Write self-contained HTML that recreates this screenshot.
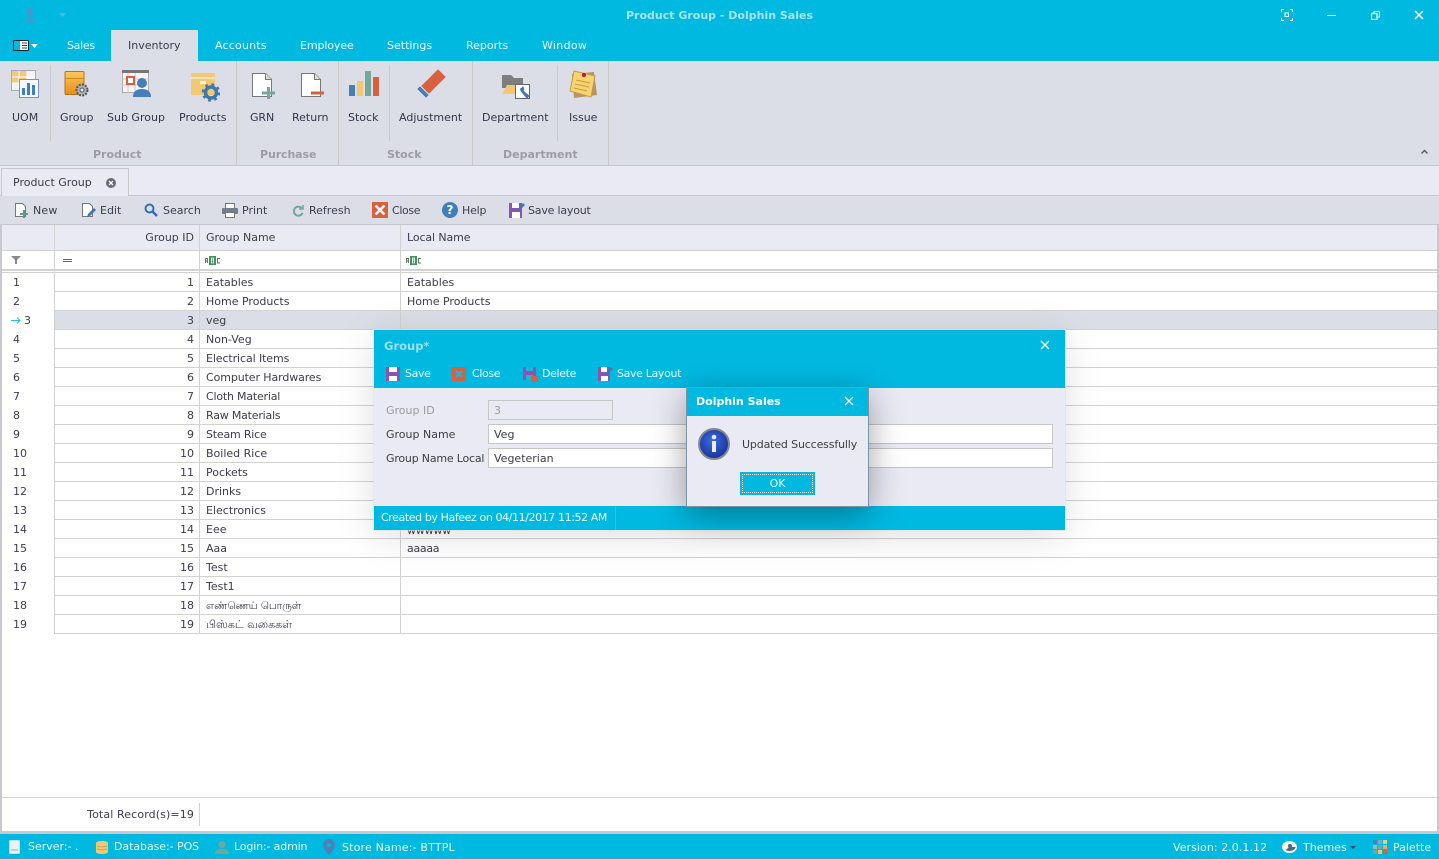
<!DOCTYPE html>
<html><head><meta charset="utf-8"><title>Product Group - Dolphin Sales</title>
<style>
html,body{margin:0;padding:0;width:1439px;height:859px;overflow:hidden;background:#fff}
body{position:relative;font:11px/14px "DejaVu Sans","Noto Sans CJK JP",sans-serif;color:#3c3c4a}
div,span,svg{position:absolute;white-space:nowrap}
.w{color:#fff}
.c{text-align:center}
.mt{top:39px;color:#eefaff}
.rl{top:111px;color:#34344a}
.gl{top:148px;font-weight:bold;color:#9c9ca8}
.tb{top:204px;color:#3c3c4e}
.hd{top:231px;color:#3c3c4e}
.r{left:54px;width:1384px;height:18px;border-bottom:1px solid #d2d2d2}
.n{left:13px;color:#3c3c4e}
.i{right:1245px;text-align:right}
.l{left:353px}
.v{position:absolute;width:1px;background:#d2d2d2}
.inp{height:18px;background:#fff;border:1px solid #c6c6c6;box-sizing:content-box}
.dt{color:#eefaff;top:367px;letter-spacing:-.35px}
.sb{top:840px;color:#e6f8fd}
</style></head><body>

<!-- title -->
<div style="left:0;top:0;width:1439px;height:61px;background:#00b9e1"></div>
<svg style="left:23px;top:7px" width="14" height="17" viewBox="0 0 14 17"><g fill="none" stroke="#5a8fc4" stroke-width="1.800"><circle cx="7" cy="2.400" r="1.400" fill="#5a8fc4"/><path d="M7 5v5l3 6M7 10l-3 6M7 6l3 3M7 6L4 9"/></g></svg>
<svg style="left:59px;top:13px" width="7" height="4"><path d="M0 0h7L3.500 4z" fill="#5ab6da"/></svg>
<div style="left:0;width:1439px;top:9px;text-align:center;font-weight:bold;color:#a6e4f4;font-size:11px">Product Group - Dolphin Sales</div>
<svg style="left:1281px;top:9px" width="12" height="12" fill="none" stroke="#fff"><path d="M.5 3V.5H3M9 .5h2.500V3M11.500 9v2.500H9M3 11.500H.5V9"/><rect x="4" y="4" width="3.500" height="3.500"/></svg>
<div style="left:1327px;top:15px;width:9px;height:1px;background:#fff"></div>
<svg style="left:1371px;top:11px" width="9" height="9" fill="none" stroke="#fff"><rect x=".5" y="2.500" width="5.500" height="6" stroke-width="1.200"/><path d="M3 2V.5h5.500V6H7"/></svg>
<svg style="left:1414px;top:10px" width="10" height="10" stroke="#fff" stroke-width="1.500"><path d="M1 1l8 8M9 1l-8 8"/></svg>

<!-- menu tabs -->
<svg style="left:13px;top:40px" width="16" height="11"><rect x=".5" y=".5" width="15" height="10" rx="1" fill="#fff" stroke="#123"/><rect x="1" y="1" width="6" height="9" fill="#00b9e1"/><path d="M9 3h5M9 5.500h5M9 8h5" stroke="#345"/></svg>
<svg style="left:31px;top:44px" width="7" height="4"><path d="M0 0h7L3.500 4z" fill="#fff"/></svg>
<div style="left:111px;top:30px;width:87px;height:31px;background:#dcdee7"></div>
<div class="mt" style="left:67px;letter-spacing:-.3px">Sales</div>
<div class="mt" style="left:128px;color:#3c3c4e">Inventory</div>
<div class="mt" style="left:215px;letter-spacing:.2px">Accounts</div>
<div class="mt" style="left:300px;letter-spacing:-.1px">Employee</div>
<div class="mt" style="left:387px">Settings</div>
<div class="mt" style="left:466px">Reports</div>
<div class="mt" style="left:542px;letter-spacing:.3px">Window</div>

<!-- ribbon -->
<div style="left:0;top:61px;width:1439px;height:104px;background:#dcdee7;border-bottom:1px solid #c8c8cc"></div>
<div class="v" style="left:236px;top:61px;height:104px;background:#c8c8cc"></div>
<div class="v" style="left:338px;top:61px;height:104px;background:#c8c8cc"></div>
<div class="v" style="left:472px;top:61px;height:104px;background:#c8c8cc"></div>
<div class="v" style="left:608px;top:61px;height:104px;background:#c8c8cc"></div>
<div class="v" style="left:50px;top:65px;height:76px;background:#c8c8cc"></div>
<div class="v" style="left:389px;top:65px;height:76px;background:#c8c8cc"></div>
<div class="v" style="left:557px;top:65px;height:76px;background:#c8c8cc"></div>

<!-- UOM -->
<svg style="left:10px;top:69px" width="30" height="30"><rect x="1.500" y="1.500" width="24" height="20" fill="#f3f3f6" stroke="#a8a8c0"/><rect x="2" y="2" width="15" height="12" fill="#f2c979"/><path d="M2 8h23M2 14h23M9 2v19M17 2v19" stroke="#fff"/><rect x="9.500" y="10.500" width="19" height="18" fill="#f6f8fc" stroke="#8090b8"/><rect x="12" y="19" width="3" height="7" fill="#3b80c0"/><rect x="17" y="14" width="3" height="12" fill="#3b80c0"/><rect x="22" y="16" width="3" height="10" fill="#3b80c0"/></svg>
<!-- Group -->
<svg style="left:64px;top:70px" width="26" height="28"><defs><linearGradient id="g1" x1="0" y1="0" x2="0" y2="1"><stop offset="0" stop-color="#fbc95a"/><stop offset="1" stop-color="#e88d1c"/></linearGradient></defs><rect x="1" y="1.500" width="19" height="23" rx="1" fill="url(#g1)" stroke="#b8741c"/><path d="M1 8.500h19" stroke="#c98a26"/><circle cx="18" cy="20" r="5.500" fill="#aab2bc" stroke="#555" stroke-width="2" stroke-dasharray="2 1.200"/><circle cx="18" cy="20" r="2" fill="#eee" stroke="#555"/></svg>
<!-- Sub group -->
<svg style="left:122px;top:70px" width="30" height="28"><rect x=".5" y=".5" width="26" height="22" fill="#f5f5f8" stroke="#aaa"/><rect x="0" y="0" width="27" height="3" fill="#777"/><path d="M0 9h27M0 15h27M6 3v20M13 3v20" stroke="#c8c8d0"/><rect x="5" y="7" width="7" height="7" fill="#fff" stroke="#d9603c" stroke-width="2"/><circle cx="20" cy="13" r="5" fill="#467fb8"/><path d="M11 27c0-6 4-8 9-8s9 2 9 8z" fill="#467fb8"/></svg>
<!-- Products -->
<svg style="left:191px;top:73px" width="29" height="29"><rect x="0" y="0" width="24" height="22" fill="#f2c873"/><path d="M0 5h24" stroke="#fff"/><rect x="9" y="8" width="6" height="3" fill="#fff" opacity=".8"/><circle cx="20" cy="19.500" r="5.500" fill="none" stroke="#3f78b0" stroke-width="3.500"/><circle cx="20" cy="19.500" r="8" fill="none" stroke="#3f78b0" stroke-width="2.500" stroke-dasharray="2.800 3.500"/></svg>
<!-- GRN -->
<svg style="left:252px;top:73px" width="24" height="26"><path d="M.5.500h13l6 6v17H.5z" fill="#fff" stroke="#777"/><path d="M13.500.500v6h6" fill="#ddd" stroke="#777"/><path d="M10 20h13M16.500 14v13" stroke="#74a898" stroke-width="3"/></svg>
<!-- Return -->
<svg style="left:301px;top:73px" width="24" height="26"><path d="M.5.500h13l6 6v17H.5z" fill="#fff" stroke="#777"/><path d="M13.500.500v6h6" fill="#ddd" stroke="#777"/><path d="M10 20h13" stroke="#d9603c" stroke-width="3"/></svg>
<!-- Stock -->
<svg style="left:349px;top:71px" width="30" height="26"><rect x="0" y="14" width="6" height="11" fill="#467fb8"/><rect x="8" y="10" width="6" height="15" fill="#f2c873"/><rect x="16" y="0" width="6" height="25" fill="#74a898"/><rect x="24" y="6" width="6" height="19" fill="#d9603c"/></svg>
<!-- Adjustment -->
<svg style="left:416px;top:69px" width="30" height="29"><path d="M22 1l7 7L13 24l-7-7z" fill="#d9603c" stroke="#d9603c" stroke-linejoin="round"/><path d="M4 18l8 8-2 2-8-8z" fill="#467fb8" stroke="#467fb8" stroke-linejoin="round"/></svg>
<!-- Department -->
<svg style="left:501px;top:74px" width="32" height="28"><path d="M1 1h9l3 3h9v10H1z" fill="#7e7e7e"/><path d="M1 20l5-9h14v9z" fill="#f2c873"/><rect x="14.500" y="10.500" width="14" height="14" fill="#fff" stroke="#666"/><path d="M20 14a3.500 3.500 0 0 0 1 4l5 6 2-2-6-5a3.500 3.500 0 0 0 0-4l-2 2z" fill="#3f78b0" stroke="#3f78b0"/></svg>
<!-- Issue -->
<svg style="left:568px;top:69px" width="30" height="30"><path d="M4 5l22-2 3 23-23 3z" fill="#a87c3c" opacity=".75"/><path d="M6 2l21 5-4 21-21-6z" fill="#f8d570" stroke="#c49a45"/><path d="M8 11l14 3M7 15l14 3M6 19l13 3" stroke="#c49a45"/><circle cx="16" cy="6" r="2" fill="#c8102e"/></svg>

<div class="rl" style="left:12px">UOM</div>
<div class="rl" style="left:60px">Group</div>
<div class="rl" style="left:107px">Sub Group</div>
<div class="rl" style="left:179px">Products</div>
<div class="rl" style="left:250px;letter-spacing:-.1px">GRN</div>
<div class="rl" style="left:292px">Return</div>
<div class="rl" style="left:348px">Stock</div>
<div class="rl" style="left:399px">Adjustment</div>
<div class="rl" style="left:482px">Department</div>
<div class="rl" style="left:569px">Issue</div>
<div class="gl" style="left:93px">Product</div>
<div class="gl" style="left:260px;letter-spacing:-.1px">Purchase</div>
<div class="gl" style="left:387px">Stock</div>
<div class="gl" style="left:503px">Department</div>
<svg style="left:1421px;top:149px" width="7" height="5" fill="none" stroke="#556" stroke-width="1.400"><path d="M.5 4.500l3-3 3 3"/></svg>

<!-- doc tabs -->
<div style="left:0;top:166px;width:1439px;height:30px;background:#e9eaf4;border-bottom:1px solid #c8c8cc;box-sizing:border-box"></div>
<div style="left:1px;top:168px;width:128px;height:28px;background:#e9eaf4;border:1px solid #c8c8cc;border-bottom:0;box-sizing:border-box"></div>
<div style="left:13px;top:176px">Product Group</div>
<svg style="left:106px;top:178px" width="10" height="10"><circle cx="5" cy="5" r="5" fill="#6a6a72"/><path d="M3 3l4 4M7 3l-4 4" stroke="#fff" stroke-width="1.300"/></svg>

<!-- toolbar -->
<div style="left:0;top:196px;width:1439px;height:28px;background:#dcdee7;border-bottom:1px solid #c8c8cc"></div>
<svg style="left:15px;top:203px" width="14" height="15"><path d="M.5.500h7l3 3v10H.5z" fill="#fff" stroke="#777"/><path d="M5 11h8M9 7v8" stroke="#5a9c88" stroke-width="2"/></svg>
<div class="tb" style="left:33px;letter-spacing:.2px">New</div>
<svg style="left:82px;top:203px" width="14" height="15"><path d="M.5.500h7l3 3v10H.5z" fill="#fff" stroke="#777"/><path d="M5 14l1-3 6-6 2 2-6 6z" fill="#3f78b0"/></svg>
<div class="tb" style="left:100px">Edit</div>
<svg style="left:144px;top:203px" width="14" height="14" fill="none" stroke="#2e70b8"><circle cx="5.500" cy="5.500" r="4" stroke-width="2"/><path d="M8.500 8.500l4.500 4.500" stroke-width="2.500"/></svg>
<div class="tb" style="left:163px">Search</div>
<svg style="left:222px;top:203px" width="16" height="15"><rect x="3.500" y=".5" width="9" height="5" fill="#fff" stroke="#777"/><rect x="0" y="5" width="16" height="6" rx="1" fill="#6f7f90"/><rect x="3.500" y="9.500" width="9" height="5" fill="#fff" stroke="#777"/></svg>
<div class="tb" style="left:242px">Print</div>
<svg style="left:292px;top:205px" width="12" height="12" fill="none" stroke="#6fa898" stroke-width="2"><path d="M10 3.500A4.500 4.500 0 1 0 10.500 8"/><path d="M11 0v4H7" stroke-width="1.500"/></svg>
<div class="tb" style="left:309px">Refresh</div>
<div style="left:372px;top:202px;width:16px;height:16px;background:#d9603c"></div>
<svg style="left:372px;top:202px" width="16" height="16" stroke="#f2f2f2" stroke-width="2.600"><path d="M3.500 3.500l9 9M12.500 3.500l-9 9"/></svg>
<div class="tb" style="left:392px;letter-spacing:-.35px">Close</div>
<div style="left:442px;top:202px;width:16px;height:16px;border-radius:8px;background:#3c7fbc;color:#fff;font:bold 12px/16px 'DejaVu Sans',sans-serif;text-align:center">?</div>
<div class="tb" style="left:462px;letter-spacing:-.2px">Help</div>
<svg style="left:509px;top:202px" width="16" height="16"><path d="M0 1h13v15H0z" fill="#8a55b0"/><rect x="3" y="1" width="7" height="5" fill="#fff"/><rect x="3" y="10" width="8" height="6" fill="#fff"/><path d="M9 7l5-6 2 2-5 5z" fill="#3f78b0"/></svg>
<div class="tb" style="left:528px;letter-spacing:-.2px">Save layout</div>

<!-- grid frame -->
<div style="left:0;top:225px;width:2px;height:606px;background:#c8c8d0"></div>
<div style="left:1437px;top:225px;width:2px;height:606px;background:#c8c8d0"></div>
<div style="left:2px;top:225px;width:1435px;height:25px;background:#e9eaf4;border-bottom:1px solid #d2d2d2"></div>
<div style="left:2px;top:269px;width:1435px;height:2px;background:#d2d2d2"></div>
<div style="left:2px;top:272px;width:1435px;height:1px;background:#d2d2d2"></div>
<div class="v" style="left:54px;top:225px;height:409px"></div>
<div class="v" style="left:199px;top:225px;height:409px"></div>
<div class="v" style="left:400px;top:225px;height:409px"></div>
<div class="hd" style="right:1245px">Group ID</div>
<div class="hd" style="left:206px">Group Name</div>
<div class="hd" style="left:407px;letter-spacing:-.1px">Local Name</div>
<svg style="left:11px;top:256px" width="10" height="8"><path d="M0 0h10L6 4v4H4V4z" fill="#8a8a8a"/></svg>
<div style="left:63px;top:259px;width:9px;height:3px;border-top:1px solid #666;border-bottom:1px solid #666;box-sizing:border-box"></div>
<svg style="left:205px;top:256px" width="16" height="9"><rect x="4" y="0" width="7" height="9" fill="#3f9460"/><path d="M6.500 2h2v2h-2zM6.500 4h2v3h-2z" fill="none" stroke="#fff" stroke-width=".8"/><path d="M.5 7V2.500h2V7M.5 5h2M15 2.500h-2.500V7H15" fill="none" stroke="#666" stroke-width=".9"/></svg>
<svg style="left:406px;top:256px" width="16" height="9"><rect x="4" y="0" width="7" height="9" fill="#3f9460"/><path d="M6.500 2h2v2h-2zM6.500 4h2v3h-2z" fill="none" stroke="#fff" stroke-width=".8"/><path d="M.5 7V2.500h2V7M.5 5h2M15 2.500h-2.500V7H15" fill="none" stroke="#666" stroke-width=".9"/></svg>

<!-- rows -->
<div class="r" style="top:273px"></div><div class="r" style="top:292px"></div>
<div class="r" style="top:311px;background:#dcdee7;left:55px;width:1382px"></div>
<div class="r" style="top:330px"></div><div class="r" style="top:349px"></div><div class="r" style="top:368px"></div><div class="r" style="top:387px"></div><div class="r" style="top:406px"></div><div class="r" style="top:425px"></div><div class="r" style="top:444px"></div><div class="r" style="top:463px"></div><div class="r" style="top:482px"></div><div class="r" style="top:501px"></div><div class="r" style="top:520px"></div><div class="r" style="top:539px"></div><div class="r" style="top:558px"></div><div class="r" style="top:577px"></div><div class="r" style="top:596px"></div><div class="r" style="top:615px"></div>
<div class="v" style="left:199px;top:273px;height:361px"></div>
<div class="v" style="left:400px;top:273px;height:361px"></div>

<div class="n" style="top:276px">1</div><div class="i" style="top:276px">1</div><div style="top:276px;left:206px">Eatables</div><div style="top:276px;left:407px">Eatables</div>
<div class="n" style="top:295px">2</div><div class="i" style="top:295px">2</div><div style="top:295px;left:206px">Home Products</div><div style="top:295px;left:407px">Home Products</div>
<svg style="left:11px;top:317px" width="10" height="7" fill="none" stroke="#22c0e8"><path d="M0 3.500h9M6 .5l3 3-3 3"/></svg>
<div style="left:24px;top:314px">3</div><div class="i" style="top:314px">3</div><div style="top:314px;left:206px">veg</div>
<div class="n" style="top:333px">4</div><div class="i" style="top:333px">4</div><div style="top:333px;left:206px">Non-Veg</div>
<div class="n" style="top:352px">5</div><div class="i" style="top:352px">5</div><div style="top:352px;left:206px;letter-spacing:-.1px">Electrical Items</div>
<div class="n" style="top:371px">6</div><div class="i" style="top:371px">6</div><div style="top:371px;left:206px;letter-spacing:-.1px">Computer Hardwares</div>
<div class="n" style="top:390px">7</div><div class="i" style="top:390px">7</div><div style="top:390px;left:206px;letter-spacing:-.2px">Cloth Material</div>
<div class="n" style="top:409px">8</div><div class="i" style="top:409px">8</div><div style="top:409px;left:206px;letter-spacing:-.2px">Raw Materials</div>
<div class="n" style="top:428px">9</div><div class="i" style="top:428px">9</div><div style="top:428px;left:206px;letter-spacing:-.2px">Steam Rice</div>
<div class="n" style="top:447px">10</div><div class="i" style="top:447px">10</div><div style="top:447px;left:206px">Boiled Rice</div>
<div class="n" style="top:466px">11</div><div class="i" style="top:466px">11</div><div style="top:466px;left:206px">Pockets</div>
<div class="n" style="top:485px">12</div><div class="i" style="top:485px">12</div><div style="top:485px;left:206px">Drinks</div>
<div class="n" style="top:504px">13</div><div class="i" style="top:504px">13</div><div style="top:504px;left:206px">Electronics</div>
<div class="n" style="top:523px">14</div><div class="i" style="top:523px">14</div><div style="top:523px;left:206px">Eee</div><div style="top:524px;left:407px;letter-spacing:-.2px">wwwww</div>
<div class="n" style="top:542px">15</div><div class="i" style="top:542px">15</div><div style="top:542px;left:206px">Aaa</div><div style="top:542px;left:407px;letter-spacing:-.3px">aaaaa</div>
<div class="n" style="top:561px">16</div><div class="i" style="top:561px">16</div><div style="top:561px;left:206px">Test</div>
<div class="n" style="top:580px">17</div><div class="i" style="top:580px">17</div><div style="top:580px;left:206px">Test1</div>
<div class="n" style="top:599px">18</div><div class="i" style="top:599px">18</div><div style="top:599px;left:206px;font-size:10.400px">எண்ணெய் பொருள்</div>
<div class="n" style="top:618px">19</div><div class="i" style="top:618px">19</div><div style="top:618px;left:206px;font-size:11px">பிஸ்கட் வகைகள்</div>

<!-- footer -->
<div style="left:2px;top:797px;width:1435px;height:1px;background:#d2d2d2"></div>
<div class="v" style="left:199px;top:803px;height:23px"></div>
<div style="right:1245px;top:808px;letter-spacing:.12px">Total Record(s)=19</div>

<!-- status -->
<div style="left:0;top:831px;width:1439px;height:3px;background:#c8c8d0"></div>
<div style="left:0;top:834px;width:1439px;height:25px;background:#00b9e1"></div>
<svg style="left:9px;top:840px" width="11" height="14"><rect x=".5" y=".5" width="10" height="13" rx="1" fill="#e8f2f8" stroke="#cde"/><path d="M2 10h7" stroke="#8ab"/></svg>
<div class="sb" style="left:28px">Server:- .</div>
<svg style="left:96px;top:841px" width="12" height="13"><path d="M0 2a6 2 0 0 1 12 0v9a6 2 0 0 1-12 0z" fill="#f2c873"/><path d="M1 5c3 1 7 1 10 0M1 8c3 1 7 1 10 0" stroke="#c9a455" fill="none"/></svg>
<div class="sb" style="left:114px;letter-spacing:-.06px">Database:- POS</div>
<svg style="left:215px;top:841px" width="14" height="13" fill="#6fa898"><circle cx="7" cy="3.500" r="3.500"/><path d="M0 13c0-4 3-5 7-5s7 1 7 5z"/></svg>
<div class="sb" style="left:234px;letter-spacing:-.15px">Login:- admin</div>
<svg style="left:323px;top:839px" width="12" height="16"><path d="M6 0a6 6 0 0 1 6 6c0 4-6 10-6 10S0 10 0 6a6 6 0 0 1 6-6z" fill="#4f80b8"/><circle cx="6" cy="6" r="2" fill="#00b9e1"/></svg>
<div class="sb" style="left:342px;top:841px;letter-spacing:.17px">Store Name:- BTTPL</div>
<div class="sb" style="left:1173px;top:841px;letter-spacing:.06px">Version: 2.0.1.12</div>
<svg style="left:1282px;top:841px" width="15" height="12"><ellipse cx="7.500" cy="6" rx="7.500" ry="6" fill="#f2f6fa"/><path d="M7.500 6h6a6 4 0 0 1-10 3z" fill="#567"/><circle cx="8" cy="5" r="2" fill="#567"/></svg>
<div class="sb" style="left:1303px;top:841px">Themes</div>
<svg style="left:1350px;top:846px" width="6" height="3"><path d="M0 0h6L3 3z" fill="#446"/></svg>
<svg style="left:1373px;top:840px" width="14" height="14"><rect width="4" height="4" fill="#4f80b8"/><rect x="5" width="4" height="4" fill="#7fa8c8"/><rect x="10" width="4" height="4" fill="#f2c873"/><rect y="5" width="4" height="4" fill="#8fbcc8"/><rect x="5" y="5" width="4" height="4" fill="#74a898"/><rect x="10" y="5" width="4" height="4" fill="#eea860"/><rect y="10" width="4" height="4" fill="#74a898"/><rect x="5" y="10" width="4" height="4" fill="#f2c873"/><rect x="10" y="10" width="4" height="4" fill="#d9603c"/></svg>
<div class="sb" style="left:1393px;top:841px">Palette</div>

<!-- Group dialog -->
<div style="left:374px;top:330px;width:691px;height:200px;background:#e9eaf4;box-shadow:0 0 0 1px rgba(225,225,225,.6),0 6px 36px rgba(0,0,0,.13)"></div>
<div style="left:374px;top:330px;width:691px;height:58px;background:#00b9e1"></div>
<div style="left:374px;top:506px;width:691px;height:24px;background:#00b9e1"></div>
<div style="left:384px;top:339px;font-weight:bold;color:#99dff2;font-size:11.500px">Group*</div>
<svg style="left:1040px;top:340px" width="10" height="10" stroke="#fff" stroke-width="1.300"><path d="M1 1l8 8M9 1l-8 8"/></svg>
<svg style="left:386px;top:367px" width="14" height="14"><rect width="14" height="14" fill="#8a55b0"/><rect x="3" y="0" width="8" height="5" fill="#fff"/><rect x="3" y="9" width="8" height="5" fill="#fff"/></svg>
<div class="dt" style="left:405px">Save</div>
<div style="left:452px;top:367px;width:14px;height:14px;background:#d9603c"></div>
<svg style="left:452px;top:367px" width="14" height="14" stroke="#22b4d8" stroke-width="2.400"><path d="M4 4l6 6M10 4l-6 6"/></svg>
<div class="dt" style="left:472px">Close</div>
<svg style="left:523px;top:367px" width="15" height="15"><rect width="13" height="13" fill="#8a55b0"/><rect x="3" y="0" width="7" height="4" fill="#22b4d8"/><rect x="3" y="8" width="7" height="5" fill="#22b4d8"/><rect x="8" y="9" width="7" height="6" fill="#d9603c"/></svg>
<div class="dt" style="left:542px">Delete</div>
<svg style="left:598px;top:366px" width="15" height="15"><path d="M0 1h12v14H0z" fill="#8a55b0"/><rect x="3" y="1" width="6" height="5" fill="#fff"/><rect x="3" y="10" width="7" height="5" fill="#fff"/><path d="M8 7l5-6 2 2-5 5z" fill="#3f78b0"/></svg>
<div class="dt" style="left:617px">Save Layout</div>

<div style="left:386px;top:404px;color:#9a9aa6">Group ID</div>
<div style="left:386px;top:428px">Group Name</div>
<div style="left:386px;top:452px;letter-spacing:-.2px">Group Name Local</div>
<div class="inp" style="left:488px;top:400px;width:123px;background:#e9eaf4"></div>
<div class="inp" style="left:488px;top:424px;width:563px"></div>
<div class="inp" style="left:488px;top:448px;width:563px"></div>
<div style="left:494px;top:404px;color:#9a9aa6">3</div>
<div style="left:494px;top:428px">Veg</div>
<div style="left:494px;top:452px">Vegeterian</div>
<div style="left:381px;top:511px;color:#eefaff;letter-spacing:-.4px">Created by Hafeez on 04/11/2017 11:52 AM</div>
<div class="v" style="left:615px;top:506px;height:24px;background:#25c4e6"></div>

<!-- Message box -->
<div style="left:686px;top:387px;width:183px;height:120px;box-sizing:border-box;border:1px solid #7e94a4;background:#e9eaf4;box-shadow:0 8px 32px rgba(0,0,0,.36)"></div>
<div style="left:687px;top:388px;width:181px;height:28px;background:#00b9e1"></div>
<div style="left:696px;top:395px;font-weight:bold;color:#fff;font-size:11px">Dolphin Sales</div>
<svg style="left:844px;top:396px" width="10" height="10" stroke="#fff" stroke-width="1.300"><path d="M1 1l8 8M9 1l-8 8"/></svg>
<svg style="left:698px;top:428px" width="32" height="32"><defs><radialGradient id="a" cx=".45" cy=".4" r=".7"><stop offset="0" stop-color="#3b6be0"/><stop offset="1" stop-color="#102a90"/></radialGradient></defs><circle cx="16" cy="16" r="15" fill="url(#a)" stroke="#888" stroke-width="2"/><circle cx="16" cy="9" r="2.300" fill="#eee"/><path d="M14 13h4v11h-4z" fill="#eee"/></svg>
<div style="left:742px;top:438px;letter-spacing:-.15px">Updated Successfully</div>
<div style="left:740px;top:472px;width:75px;height:23px;background:#00b9e1"></div>
<div style="left:742px;top:474px;width:71px;height:19px;border:1px dotted #fff;box-sizing:border-box"></div>
<div class="c" style="left:740px;top:477px;width:75px;color:#eefaff">OK</div>
</body></html>
